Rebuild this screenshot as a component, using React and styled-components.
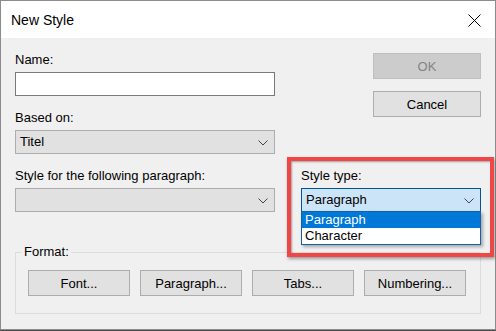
import styled, { createGlobalStyle } from "styled-components";

const GlobalStyle = createGlobalStyle`
  html, body {
    margin: 0;
    padding: 0;
    background: #4a4a4a;
  }
  body {
    font-family: "Liberation Sans", Arial, sans-serif;
    font-size: 13px;
    color: #000;
  }
`;

const Chevron = () => (
  <svg width="10" height="6" viewBox="0 0 10 6">
    <polyline points="0.5,0.5 5,5 9.5,0.5" fill="none" stroke="#444" strokeWidth="1" />
  </svg>
);

const CloseIcon = () => (
  <svg width="13" height="13" viewBox="0 0 13 13">
    <path d="M0.5 0.5 L12.5 12.5 M12.5 0.5 L0.5 12.5" stroke="#000" strokeWidth="1" />
  </svg>
);

const Combo = ({ value, active, children }) => (
  <ComboBox $active={active}>
    <span>{value}</span>
    <Chevron />
    {children}
  </ComboBox>
);

const App = () => {
  return (
    <>
      <GlobalStyle />
      <Window>
        <TitleBar>
          <span>New Style</span>
          <CloseIcon />
        </TitleBar>

        <Body>
          <TopGrid>
            <Field $area="name">
              <Label>Name:</Label>
              <TextInput />
            </Field>
            <Field $area="based">
              <Label>Based on:</Label>
              <Combo value="Titel" />
            </Field>
            <Field $area="follow">
              <Label>Style for the following paragraph:</Label>
              <Combo value="" />
            </Field>
            <Actions>
              <DialogButton disabled>OK</DialogButton>
              <DialogButton>Cancel</DialogButton>
            </Actions>
            <Field $area="type">
              <Label>Style type:</Label>
              <Combo value="Paragraph" active>
                <DropList>
                  <DropItem $selected>Paragraph</DropItem>
                  <DropItem>Character</DropItem>
                </DropList>
              </Combo>
            </Field>
          </TopGrid>

          <Group>
            <legend>Format:</legend>
            <ButtonRow>
              <FormatButton>Font...</FormatButton>
              <FormatButton>Paragraph...</FormatButton>
              <FormatButton>Tabs...</FormatButton>
              <FormatButton>Numbering...</FormatButton>
            </ButtonRow>
          </Group>
        </Body>

        <Highlight />
      </Window>
    </>
  );
};

export default App;

const Window = styled.div`
  position: relative;
  width: 496px;
  height: 330px;
  box-sizing: border-box;
  border: 1px solid #8c8c8c;
  background: #f0f0f0;
  display: flex;
  flex-direction: column;
`;

const TitleBar = styled.div`
  height: 37px;
  flex: none;
  box-sizing: border-box;
  background: #fff;
  display: flex;
  align-items: center;
  justify-content: space-between;
  padding: 1px 14px 0 10px;
  font-size: 14px;
  line-height: 16px;
`;

const Body = styled.div`
  padding: 14px 14px 0 14px;
`;

const TopGrid = styled.div`
  display: grid;
  grid-template-columns: 260px 180px;
  column-gap: 26px;
  row-gap: 14px;
  grid-template-areas:
    "name actions"
    "based actions"
    "follow type";
`;

const Field = styled.div`
  grid-area: ${(p) => p.$area};
  display: flex;
  flex-direction: column;
  gap: 4px;
`;

const Label = styled.label`
  line-height: 16px;
  white-space: nowrap;
`;

const TextInput = styled.input`
  height: 24px;
  box-sizing: border-box;
  border: 1px solid #7a7a7a;
  background: #fff;
  margin: 0;
  padding: 0 4px;
  outline: none;
`;

const ComboBox = styled.div`
  position: relative;
  height: 24px;
  box-sizing: border-box;
  border: 1px solid ${(p) => (p.$active ? "#005499" : "#adadad")};
  background: ${(p) => (p.$active ? "#cce4f7" : "#e1e1e1")};
  display: flex;
  align-items: center;
  justify-content: space-between;
  padding: 0 6px 0 4px;
  line-height: 16px;

  svg {
    margin-top: 1px;
  }
`;

const DropList = styled.div`
  position: absolute;
  left: -1px;
  right: -1px;
  top: 22px;
  z-index: 2;
  background: #fff;
  border: 1px solid #1460aa;
  box-shadow: 2px 2px 3px rgba(0, 0, 0, 0.3);
`;

const DropItem = styled.div`
  height: 16px;
  line-height: 16px;
  padding: 0 3px;
  background: ${(p) => (p.$selected ? "#0078d7" : "#fff")};
  color: ${(p) => (p.$selected ? "#fff" : "#000")};
`;

const Actions = styled.div`
  grid-area: actions;
  display: flex;
  flex-direction: column;
  align-items: flex-end;
  gap: 12px;
  padding-top: 1px;
`;

const DialogButton = styled.button`
  width: 108px;
  height: 26px;
  margin: 0;
  font: inherit;
  border: 1px solid #adadad;
  background: #e1e1e1;
  color: #000;

  &:disabled {
    border-color: #bfbfbf;
    background: #cccccc;
    color: #838383;
  }
`;

const Group = styled.fieldset`
  margin: 32px 0 0;
  padding: 0 6px;
  min-width: 0;
  border: 1px solid #dcdcdc;

  legend {
    padding: 0 2px;
    line-height: 16px;
  }
`;

const ButtonRow = styled.div`
  display: flex;
  gap: 10px;
  padding: 10px 8px 17px 6px;
`;

const FormatButton = styled(DialogButton)`
  width: 102px;
`;

const Highlight = styled.div`
  position: absolute;
  left: 286px;
  top: 156px;
  width: 207px;
  height: 100px;
  box-sizing: border-box;
  border: 4px solid #f04646;
  box-shadow: 1px 2px 3px rgba(0, 0, 0, 0.35), inset 1px 1px 2px rgba(0, 0, 0, 0.35);
  pointer-events: none;
  z-index: 3;
`;
